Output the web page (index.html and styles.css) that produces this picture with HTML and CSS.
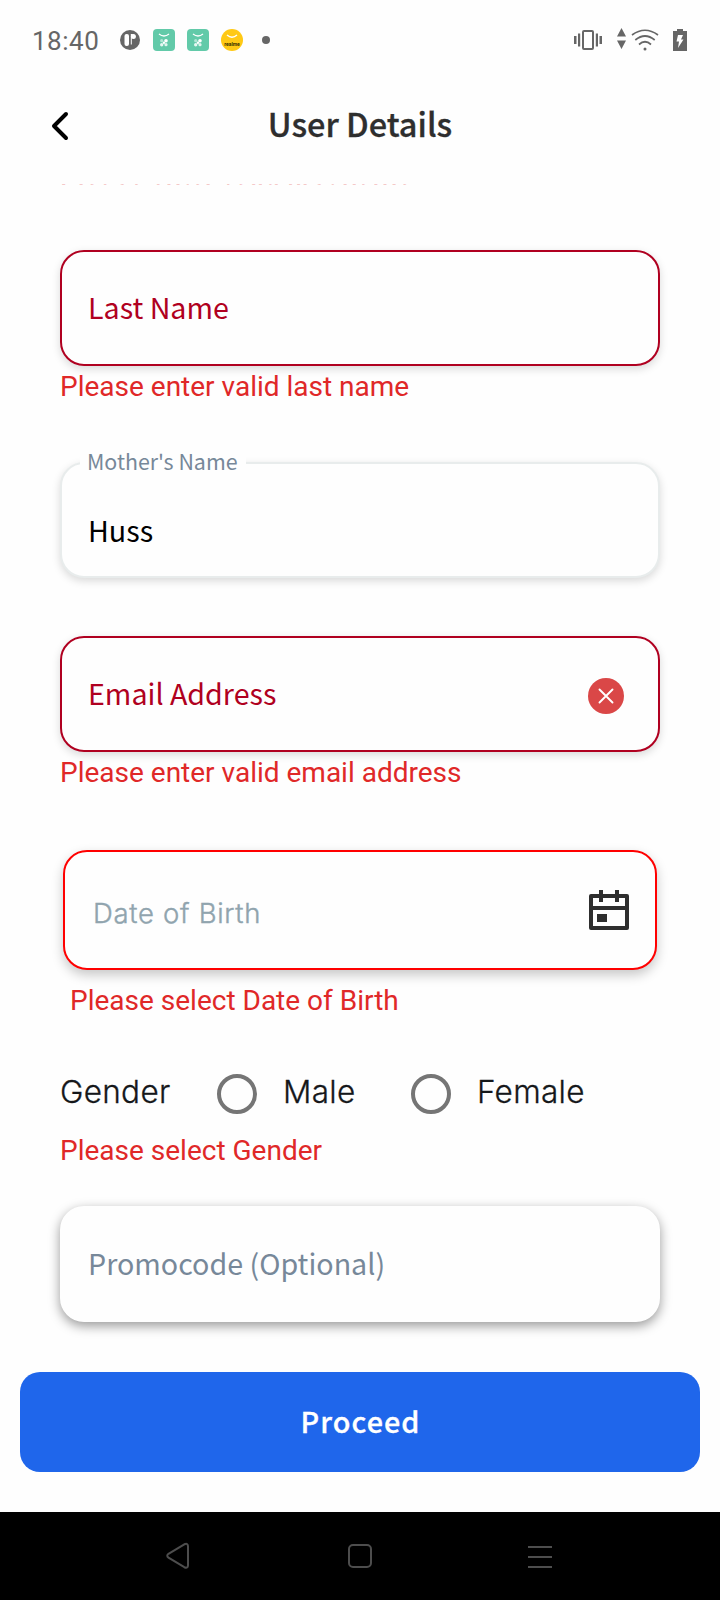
FILE: index.html
```html
<!DOCTYPE html>
<html lang="en">
<head>
<meta charset="utf-8">
<title>User Details</title>
<link rel="stylesheet" href="styles.css">
</head>
<body>
<div class="screen">
  <div class="status">
    <span class="clock">18:40</span>
    <div class="notifications">
      <svg class="app" width="20" height="20" viewBox="0 0 20 20"><circle cx="10" cy="10" r="10" fill="#666"/><rect x="4.500" y="4" width="4.500" height="12" rx="2" fill="#fff"/><path d="M10.800 4h2v3.500l-1 .5v6.500h-1z" fill="#fff"/><circle cx="13.400" cy="6.500" r="2.500" fill="#fff"/></svg>
      <svg class="app" width="22" height="22" viewBox="0 0 22 22"><rect width="22" height="22" rx="4" fill="#62caa9"/><path d="M6 5q5 4 10 0" fill="none" stroke="#fff" stroke-width="1.3"/><g fill="#fff"><circle cx="8.7" cy="11.7" r="1.6" opacity=".5"/><circle cx="13" cy="11.7" r="1.8"/><circle cx="8.7" cy="15.7" r="1.7" opacity=".85"/><circle cx="13" cy="15.7" r="1.6" opacity=".8"/><circle cx="10.9" cy="13.7" r="1.2"/></g></svg>
      <svg class="app" width="22" height="22" viewBox="0 0 22 22"><rect width="22" height="22" rx="4" fill="#62caa9"/><path d="M6 5q5 4 10 0" fill="none" stroke="#fff" stroke-width="1.3"/><g fill="#fff"><circle cx="8.7" cy="11.7" r="1.6" opacity=".5"/><circle cx="13" cy="11.7" r="1.8"/><circle cx="8.7" cy="15.7" r="1.7" opacity=".85"/><circle cx="13" cy="15.7" r="1.6" opacity=".8"/><circle cx="10.9" cy="13.7" r="1.2"/></g></svg>
      <svg class="app" width="22" height="22" viewBox="0 0 22 22"><circle cx="11" cy="11" r="11" fill="#ffc915"/><path d="M6 6q5 4.500 10 0" fill="none" stroke="#fff" stroke-width="1.300"/><text class="brand" x="11" y="17" text-anchor="middle">realme</text></svg>
      <i class="more"></i>
    </div>
    <div class="system">
      <svg width="28" height="20" viewBox="0 0 28 20" fill="#666"><rect x="9" y="1" width="10" height="18" rx="1" fill="none" stroke="#666" stroke-width="2"/><rect x="0" y="6" width="2.500" height="8"/><rect x="4" y="3.500" width="2.200" height="13"/><rect x="21.800" y="3.500" width="2.200" height="13"/><rect x="25.500" y="6" width="2.500" height="8"/></svg>
      <svg class="traffic" width="9" height="21" viewBox="0 0 9 21" fill="#666"><path d="M4.500 0L9 8.500H0zM4.500 21L9 12.500H0z"/></svg>
      <svg class="wifi" width="28" height="22" viewBox="0 0 28 22" fill="none" stroke="#666" stroke-width="1.700"><path d="M1 6q13-9.500 26 0M4.300 11q9.700-8 19.400 0M8 15.500q6-5.500 12 0"/><circle cx="14" cy="20" r="1.500" fill="#666" stroke="none"/></svg>
      <svg class="battery" width="14" height="22" viewBox="0 0 14 22"><path d="M4 0h6v2h4v20H0V2h4z" fill="#666"/><path d="M5 6h5L8 10.500H10.500L5 19l1-6.500H3.500z" fill="#fff"/></svg>
    </div>
  </div>

  <header class="bar">
    <svg class="back" width="20" height="32" viewBox="0 0 20 32" fill="none" stroke="#000" stroke-width="4" stroke-linecap="round" stroke-linejoin="round"><path d="M16 4L4 16l12 12"/></svg>
    <h1 class="title">User Details</h1>
  </header>

  <main class="form">
    <div class="scrolled"><p class="error">Please enter valid first name</p></div>
    <div class="field invalid first"><span class="label">Last Name</span></div>
    <p class="error">Please enter valid last name</p>

    <div class="field filled"><span class="legend">Mother's Name</span><span class="value">Huss</span></div>

    <div class="field invalid email"><span class="label">Email Address</span>
      <svg class="clear" width="36" height="36" viewBox="0 0 36 36"><circle cx="18" cy="18" r="18" fill="#da4747"/><path d="M11.500 11.500l13 13m0-13l-13 13" stroke="#fff" stroke-width="1.900" stroke-linecap="round"/></svg>
    </div>
    <p class="error">Please enter valid email address</p>

    <div class="field date"><span class="hint">Date of Birth</span>
      <svg class="calendar" width="40" height="40" viewBox="0 0 40 40" fill="none" stroke="#2e2e2e" stroke-width="4" stroke-linejoin="round"><rect x="2" y="6" width="36" height="32"/><path d="M2 18h36M12 0v12M28 0v12"/><path d="M8 24h10v8H8z" fill="#2e2e2e" stroke="none"/></svg>
    </div>
    <p class="error date-error">Please select Date of Birth</p>

    <div class="gender">
      <span class="g-title">Gender</span>
      <i class="radio"></i><span class="male">Male</span>
      <i class="radio"></i><span class="female">Female</span>
    </div>
    <p class="error">Please select Gender</p>

    <div class="field promo"><span class="label">Promocode (Optional)</span></div>
  </main>

  <button class="proceed">Proceed</button>

  <nav class="nav">
    <svg class="nav-back" width="24" height="28" viewBox="0 0 24 28"><path d="M18.300 2.300L2.500 11.800q-2.500 1.900 0 3.800l15.800 9.600q3.700 1.500 3.700-2V4.300q0-3.500-3.700-2z"/></svg>
    <svg width="24" height="24" viewBox="0 0 24 24"><rect x="1" y="1" width="22" height="22" rx="4"/></svg>
    <svg class="nav-menu" width="24" height="22" viewBox="0 0 24 22"><path d="M0 1h24M0 11h24M0 21h24"/></svg>
  </nav>
</div>
</body>
</html>
```
FILE: styles.css
```css
* { box-sizing: border-box; }
body { margin: 0; background: #fefefe; }
p, h1 { margin: 0; }
svg { display: block; flex: none; }

.screen {
  display: flex;
  flex-direction: column;
  width: 720px;
  height: 1600px;
  overflow: hidden;
  font-family: "Noto Sans CJK SC", "Noto Sans", sans-serif;
}

/* Status bar */
.status {
  display: flex;
  align-items: center;
  height: 80px;
  padding: 0 33px 0 32px;
}
.clock {
  width: 88px;
  font: 26px/30px Roboto, sans-serif;
  letter-spacing: 0.5px;
  color: #666;
  padding-top: 1px;
}
.notifications { display: flex; align-items: center; gap: 12px; }
.app:first-child { margin-right: 1px; }
.brand { font: bold 5px Roboto, sans-serif; fill: #3a2e00; }
.more { width: 8px; height: 8px; margin-left: 7px; border-radius: 50%; background: #666; }
.system { display: flex; align-items: center; margin-left: auto; }
.traffic { margin: -4px 5px 0 15px; }
.battery { margin-left: 14px; }

/* Title bar */
.bar {
  display: grid;
  grid-template-columns: 60px 1fr 60px;
  align-items: center;
  height: 104px;
  padding: 0 0 12px;
}
.back { margin-left: 50px; }
.title {
  padding-bottom: 7px;
  text-align: center;
  font-size: 32.5px;
  line-height: 48px;
  font-weight: 500;
  color: #2e2e2e;
  -webkit-text-stroke: 0.3px #2e2e2e;
}

/* Form */
.form { height: 1188px; padding: 0 60px; }
.scrolled { height: 66px; overflow: hidden; }
/* Only the lowest edge of this message is still inside the scroll area */
.scrolled .error { margin-top: -30px; -webkit-text-stroke: 0.5px #e02828; }
.error {
  font: 28px/36px Roboto, sans-serif;
  color: #e02828;
  padding-top: 3px;
  height: 38px;
  white-space: nowrap;
}
.field {
  position: relative;
  display: flex;
  align-items: center;
  justify-content: space-between;
  height: 116px;
  padding: 0 26px;
  border: 2px solid #e8ecec;
  border-radius: 24px;
  background: #fefefe;
  box-shadow: 0 3px 8px rgba(0, 0, 0, .15);
}
.label, .value { font-size: 28.65px; line-height: 44px; white-space: nowrap; }
.label { padding-bottom: 2px; }
.invalid { border-color: #b00020; color: #b00020; }
.filled { margin-top: 58px; }
.value { padding-top: 20px; color: #000; }
.legend {
  position: absolute;
  left: 18px;
  top: -19px;
  padding: 0 8px 0 7px;
  background: #fefefe;
  font-size: 21.4px;
  line-height: 32px;
  color: #778899;
  white-space: nowrap;
}
.email { margin-top: 58px; padding-right: 34px; }
.clear { margin-top: 4px; }
.date {
  height: 120px;
  margin: 60px 3px 0;
  padding: 0 26px 0 28px;
  border-color: #f00;
  box-shadow: 0 5px 12px rgba(0, 0, 0, .22);
}
.hint {
  font: 300 27.5px/36px Inter, sans-serif;
  letter-spacing: 0.7px;
  color: #90a4ae;
  -webkit-text-stroke: 0.4px #90a4ae;
  padding-top: 5px;
}
.date-error { margin: 10px 0 0 10px; }
.gender {
  display: flex;
  align-items: center;
  height: 60px;
  margin: 46px 0 6px;
  font: 300 31.5px/40px Inter, sans-serif;
  letter-spacing: 0.3px;
  color: #15171a;
  -webkit-text-stroke: 0.3px #15171a;
}
.gender span { padding-bottom: 4px; }
.gender .g-title { width: 157px; }
.radio { flex: none; width: 40px; height: 40px; border: 4px solid #757575; border-radius: 50%; }
.gender .male { width: 154px; padding-left: 26px; }
.gender .female { padding-left: 26px; }
.promo {
  margin-top: 38px;
  border-color: #fefefe;
  color: #778899;
  box-shadow: 0 4px 12px rgba(0, 0, 0, .4);
}

.proceed {
  height: 100px;
  margin: 0 20px 40px;
  padding: 0 0 2px;
  border: 0;
  border-radius: 20px;
  background: #1f66eb;
  color: #fff;
  font: 500 28.8px/44px "Noto Sans CJK SC", sans-serif;
  letter-spacing: 1.05px;
  text-indent: 1px;
  -webkit-text-stroke: 0.3px #fff;
}

/* System navigation */
.nav {
  display: flex;
  align-items: center;
  justify-content: center;
  gap: 156px;
  height: 88px;
  background: #000;
}
.nav svg { fill: none; stroke: #4d4d4d; stroke-width: 2; }
.nav-back { margin-left: -2px; margin-right: 2px; }
.nav-menu { margin-top: 2px; }
```
